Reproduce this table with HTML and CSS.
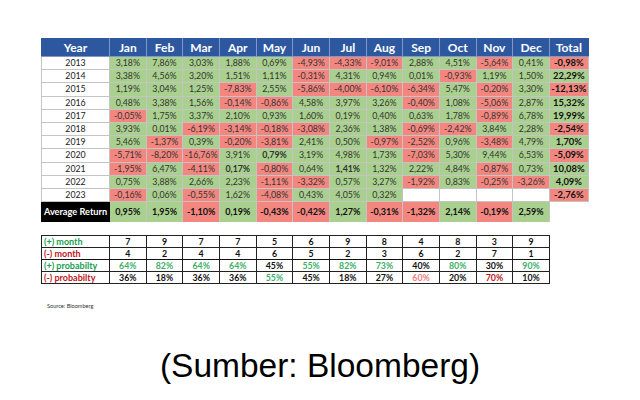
FILE: index.html
```html
<!DOCTYPE html>
<html>
<head>
<meta charset="utf-8">
<link rel="stylesheet" href="styles.css">
</head>
<body>
<div class="page">
  <table class="ret">
    <colgroup><col class="cy"><col class="cm"><col class="cm"><col class="cm"><col class="cm"><col class="cm"><col class="cm"><col class="cm"><col class="cm"><col class="cm"><col class="cm"><col class="cm"><col class="cm"><col class="ct"></colgroup>
    <thead>
      <tr><th>Year</th><th>Jan</th><th>Feb</th><th>Mar</th><th>Apr</th><th>May</th><th>Jun</th><th>Jul</th><th>Aug</th><th>Sep</th><th>Oct</th><th>Nov</th><th>Dec</th><th>Total</th></tr>
    </thead>
    <tbody>
      <tr><td class="y">2013</td><td class="g">3,18%</td><td class="g">7,86%</td><td class="g">3,03%</td><td class="g">1,88%</td><td class="g">0,69%</td><td class="r">-4,93%</td><td class="r">-4,33%</td><td class="r">-9,01%</td><td class="g">2,88%</td><td class="g">4,51%</td><td class="r">-5,64%</td><td class="g">0,41%</td><td class="r t">-0,98%</td></tr>
      <tr><td class="y">2014</td><td class="g">3,38%</td><td class="g">4,56%</td><td class="g">3,20%</td><td class="g">1,51%</td><td class="g">1,11%</td><td class="r">-0,31%</td><td class="g">4,31%</td><td class="g">0,94%</td><td class="g">0,01%</td><td class="r">-0,93%</td><td class="g">1,19%</td><td class="g">1,50%</td><td class="g t">22,29%</td></tr>
      <tr><td class="y">2015</td><td class="g">1,19%</td><td class="g">3,04%</td><td class="g">1,25%</td><td class="r">-7,83%</td><td class="g">2,55%</td><td class="r">-5,86%</td><td class="r">-4,00%</td><td class="r">-6,10%</td><td class="r">-6,34%</td><td class="g">5,47%</td><td class="r">-0,20%</td><td class="g">3,30%</td><td class="r t">-12,13%</td></tr>
      <tr><td class="y">2016</td><td class="g">0,48%</td><td class="g">3,38%</td><td class="g">1,56%</td><td class="r">-0,14%</td><td class="r">-0,86%</td><td class="g">4,58%</td><td class="g">3,97%</td><td class="g">3,26%</td><td class="r">-0,40%</td><td class="g">1,08%</td><td class="r">-5,06%</td><td class="g">2,87%</td><td class="g t">15,32%</td></tr>
      <tr><td class="y">2017</td><td class="r">-0,05%</td><td class="g">1,75%</td><td class="g">3,37%</td><td class="g">2,10%</td><td class="g">0,93%</td><td class="g">1,60%</td><td class="g">0,19%</td><td class="g">0,40%</td><td class="g">0,63%</td><td class="g">1,78%</td><td class="r">-0,89%</td><td class="g">6,78%</td><td class="g t">19,99%</td></tr>
      <tr><td class="y">2018</td><td class="g">3,93%</td><td class="g">0,01%</td><td class="r">-6,19%</td><td class="r">-3,14%</td><td class="r">-0,18%</td><td class="r">-3,08%</td><td class="g">2,36%</td><td class="g">1,38%</td><td class="r">-0,69%</td><td class="r">-2,42%</td><td class="g">3,84%</td><td class="g">2,28%</td><td class="r t">-2,54%</td></tr>
      <tr><td class="y">2019</td><td class="g">5,46%</td><td class="r">-1,37%</td><td class="g">0,39%</td><td class="r">-0,20%</td><td class="r">-3,81%</td><td class="g">2,41%</td><td class="g">0,50%</td><td class="r">-0,97%</td><td class="r">-2,52%</td><td class="g">0,96%</td><td class="r">-3,48%</td><td class="g">4,79%</td><td class="g t">1,70%</td></tr>
      <tr><td class="y">2020</td><td class="r">-5,71%</td><td class="r">-8,20%</td><td class="r">-16,76%</td><td class="g">3,91%</td><td class="g b">0,79%</td><td class="g">3,19%</td><td class="g">4,98%</td><td class="g">1,73%</td><td class="r">-7,03%</td><td class="g">5,30%</td><td class="g">9,44%</td><td class="g">6,53%</td><td class="r t">-5,09%</td></tr>
      <tr><td class="y">2021</td><td class="r">-1,95%</td><td class="g">6,47%</td><td class="r">-4,11%</td><td class="g b">0,17%</td><td class="r">-0,80%</td><td class="g">0,64%</td><td class="g b">1,41%</td><td class="g">1,32%</td><td class="g">2,22%</td><td class="g">4,84%</td><td class="r">-0,87%</td><td class="g">0,73%</td><td class="g t">10,08%</td></tr>
      <tr><td class="y">2022</td><td class="g">0,75%</td><td class="g">3,88%</td><td class="g">2,66%</td><td class="g">2,23%</td><td class="r">-1,11%</td><td class="r">-3,32%</td><td class="g">0,57%</td><td class="g">3,27%</td><td class="r">-1,92%</td><td class="g">0,83%</td><td class="r">-0,25%</td><td class="r">-3,26%</td><td class="g t">4,09%</td></tr>
      <tr><td class="y">2023</td><td class="r">-0,16%</td><td class="g">0,06%</td><td class="r">-0,55%</td><td class="g">1,62%</td><td class="r">-4,08%</td><td class="g">0,43%</td><td class="g">4,05%</td><td class="g">0,32%</td><td></td><td></td><td></td><td></td><td class="r t">-2,76%</td></tr>
      <tr class="avg"><td class="lbl">Average Return</td><td class="g">0,95%</td><td class="g">1,95%</td><td class="r">-1,10%</td><td class="g">0,19%</td><td class="r">-0,43%</td><td class="r">-0,42%</td><td class="g">1,27%</td><td class="r">-0,31%</td><td class="r">-1,32%</td><td class="g">2,14%</td><td class="r">-0,19%</td><td class="g">2,59%</td><td class="none"></td></tr>
    </tbody>
  </table>

  <table class="prob">
    <colgroup><col class="cy"><col class="cm"><col class="cm"><col class="cm"><col class="cm"><col class="cm"><col class="cm"><col class="cm"><col class="cm"><col class="cm"><col class="cm"><col class="cm"><col class="cm"></colgroup>
    <tbody>
      <tr><td class="lp">(+) month</td><td>7</td><td>9</td><td>7</td><td>7</td><td>5</td><td>6</td><td>9</td><td>8</td><td>4</td><td>8</td><td>3</td><td>9</td></tr>
      <tr class="sep"><td class="ln">(-) month</td><td>4</td><td>2</td><td>4</td><td>4</td><td>6</td><td>5</td><td>2</td><td>3</td><td>6</td><td>2</td><td>7</td><td>1</td></tr>
      <tr><td class="lp">(+) probabilty</td><td class="pg">64%</td><td class="pg">82%</td><td class="pg">64%</td><td class="pg">64%</td><td>45%</td><td class="pg">55%</td><td class="pg">82%</td><td class="pg">73%</td><td>40%</td><td class="pg">80%</td><td>30%</td><td class="pg">90%</td></tr>
      <tr><td class="ln">(-) probabilty</td><td>36%</td><td>18%</td><td>36%</td><td>36%</td><td class="pg">55%</td><td>45%</td><td>18%</td><td>27%</td><td class="pl">60%</td><td>20%</td><td class="pr">70%</td><td>10%</td></tr>
    </tbody>
  </table>

  <p class="src">Source: Bloomberg</p>

  <p class="caption">(Sumber: Bloomberg)</p>
</div>
</body>
</html>
```
FILE: styles.css
```css
html, body {
  margin: 0;
  padding: 0;
  background: #ffffff;
}

.page {
  width: 640px;
  height: 400px;
  padding: 38px 0 0 41px;
  box-sizing: border-box;
  font-family: Lato, "Open Sans", "Liberation Sans", sans-serif;
  color: #222;
}

table {
  border-collapse: collapse;
  table-layout: fixed;
}

col.cy { width: 68px; }
col.cm { width: 36.67px; }
col.ct { width: 39px; }

.ret { width: 547px; }

.ret th {
  background: #2d58a0;
  color: #fff;
  font-weight: 700;
  font-size: 12px;
  height: 17px;
  padding: 0;
  border: 1px solid #7f98c6;
  border-top-color: #2d58a0;
  line-height: 15px;
  text-align: center;
}
.ret th:first-child { border-left-color: #2d58a0; }
.ret th:last-child { border-right-color: #2d58a0; }

.ret td {
  height: 13.2px;
  padding: 0;
  font-size: 8.8px;
  line-height: 12px;
  text-align: center;
  border: 1px solid #c4c4c4;
  color: #333;
  box-sizing: border-box;
}

.ret td.y { color: #222; }

.g { background: #a9d08e; }
.r { background: #f3877f; }
.t { font-weight: 700; font-size: 9.4px !important; color: #111 !important; }
.b { font-weight: 700; }

.ret tr.avg td {
  height: 20px;
  font-weight: 700;
  font-size: 9px;
  color: #111;
  border-bottom: none;
}
.ret tr.avg td.lbl {
  background: #000;
  color: #fff;
  border-color: #000;
  font-size: 9.2px;
}
.ret tr.avg td.none {
  border: none;
  background: #fff;
}

.prob {
  width: 508px;
  margin-top: 13px;
  border: 1.5px solid #111;
}
.prob td {
  height: 12.2px;
  padding: 0;
  font-size: 8.8px;
  font-weight: 700;
  line-height: 11px;
  text-align: center;
  border: 1px solid #222;
  color: #111;
  box-sizing: border-box;
}
.prob tr.sep td { border-bottom: 1.5px solid #111; }
.prob td.lp, .prob td.ln {
  text-align: left;
  padding-left: 2px;
  font-size: 9px;
}
.prob td.lp { color: #14a050; }
.prob td.ln { color: #c0151c; }
.prob td.pg { color: #3cb06a; }
.prob td.pl { color: #f08080; }
.prob td.pr { color: #c0151c; }

.src {
  margin: 18px 0 0 6px;
  font-size: 5.6px;
  line-height: 7px;
  color: #333;
}

.caption {
  margin: 38px 0 0 -41px;
  width: 640px;
  text-align: center;
  font-family: "Liberation Sans", Arial, sans-serif;
  font-size: 33.5px;
  line-height: 38px;
  color: #000;
}
```
